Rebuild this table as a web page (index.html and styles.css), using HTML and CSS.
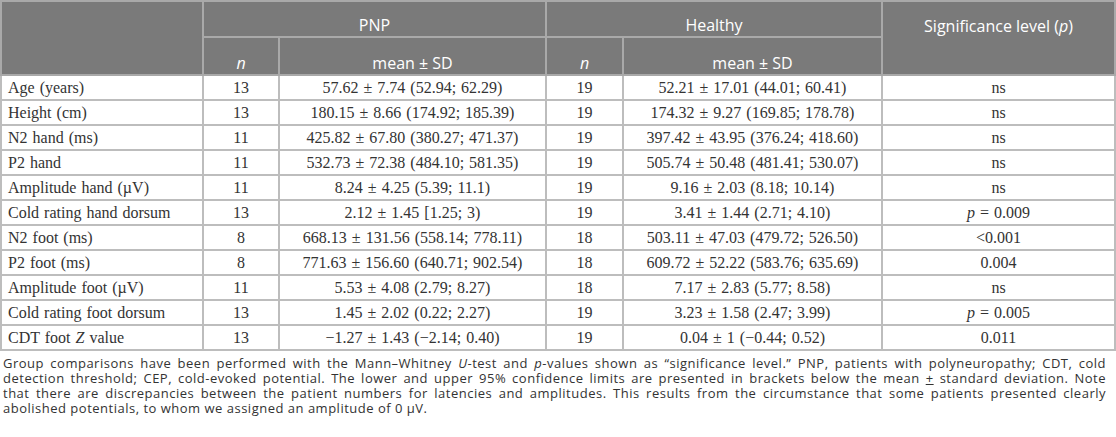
FILE: index.html
```html
<!DOCTYPE html>
<html lang="en">
<head>
    <meta charset="UTF-8">
    <title>CEP results</title>
    <link rel="stylesheet" href="styles.css">
</head>
<body>
    <table class="data-table">
        <colgroup>
            <col class="c-label">
            <col class="c-n">
            <col class="c-mean">
            <col class="c-n2">
            <col class="c-mean2">
            <col class="c-sig">
        </colgroup>
        <thead>
            <tr class="head-top">
                <th rowspan="2"></th>
                <th colspan="2">PNP</th>
                <th colspan="2">Healthy</th>
                <th rowspan="2" class="sig-head">Significance level (<i>p</i>)</th>
            </tr>
            <tr class="head-sub">
                <th><i>n</i></th>
                <th>mean ± SD</th>
                <th><i>n</i></th>
                <th>mean ± SD</th>
            </tr>
        </thead>
        <tbody>
            <tr><td>Age (years)</td><td>13</td><td>57.62 ± 7.74 (52.94; 62.29)</td><td>19</td><td>52.21 ± 17.01 (44.01; 60.41)</td><td>ns</td></tr>
            <tr><td>Height (cm)</td><td>13</td><td>180.15 ± 8.66 (174.92; 185.39)</td><td>19</td><td>174.32 ± 9.27 (169.85; 178.78)</td><td>ns</td></tr>
            <tr><td>N2 hand (ms)</td><td>11</td><td>425.82 ± 67.80 (380.27; 471.37)</td><td>19</td><td>397.42 ± 43.95 (376.24; 418.60)</td><td>ns</td></tr>
            <tr><td>P2 hand</td><td>11</td><td>532.73 ± 72.38 (484.10; 581.35)</td><td>19</td><td>505.74 ± 50.48 (481.41; 530.07)</td><td>ns</td></tr>
            <tr><td>Amplitude hand (µV)</td><td>11</td><td>8.24 ± 4.25 (5.39; 11.1)</td><td>19</td><td>9.16 ± 2.03 (8.18; 10.14)</td><td>ns</td></tr>
            <tr><td>Cold rating hand dorsum</td><td>13</td><td>2.12 ± 1.45 [1.25; 3)</td><td>19</td><td>3.41 ± 1.44 (2.71; 4.10)</td><td><i>p</i> = 0.009</td></tr>
            <tr><td>N2 foot (ms)</td><td>8</td><td>668.13 ± 131.56 (558.14; 778.11)</td><td>18</td><td>503.11 ± 47.03 (479.72; 526.50)</td><td>&lt;0.001</td></tr>
            <tr><td>P2 foot (ms)</td><td>8</td><td>771.63 ± 156.60 (640.71; 902.54)</td><td>18</td><td>609.72 ± 52.22 (583.76; 635.69)</td><td>0.004</td></tr>
            <tr><td>Amplitude foot (µV)</td><td>11</td><td>5.53 ± 4.08 (2.79; 8.27)</td><td>18</td><td>7.17 ± 2.83 (5.77; 8.58)</td><td>ns</td></tr>
            <tr><td>Cold rating foot dorsum</td><td>13</td><td>1.45 ± 2.02 (0.22; 2.27)</td><td>19</td><td>3.23 ± 1.58 (2.47; 3.99)</td><td><i>p</i> = 0.005</td></tr>
            <tr><td>CDT foot <i>Z</i> value</td><td>13</td><td>−1.27 ± 1.43 (−2.14; 0.40)</td><td>19</td><td>0.04 ± 1 (−0.44; 0.52)</td><td>0.011</td></tr>
        </tbody>
    </table>

    <p class="caption">
        <span class="cap-line">Group comparisons have been performed with the Mann–Whitney <i>U</i>-test and <i>p</i>-values shown as “significance level.” PNP, patients with polyneuropathy; CDT, cold</span>
        <span class="cap-line">detection threshold; CEP, cold-evoked potential. The lower and upper 95% confidence limits are presented in brackets below the mean <u>+</u> standard deviation. Note</span>
        <span class="cap-line">that there are discrepancies between the patient numbers for latencies and amplitudes. This results from the circumstance that some patients presented clearly</span>
        <span class="cap-end">abolished potentials, to whom we assigned an amplitude of 0 µV.</span>
    </p>
</body>
</html>
```

FILE: styles.css
```css
body {
    margin: 0;
    background-color: #ffffff;
    color: #333333;
}
.data-table {
    width: 1116px;
    table-layout: fixed;
    border-collapse: collapse;
    border: 2px solid #bdbdbd;
    font-family: "Liberation Serif", "Times New Roman", serif;
    font-size: 16px;
    word-spacing: 1px;
}
.c-label { width: 202px; }
.c-n { width: 76px; }
.c-mean { width: 267px; }
.c-n2 { width: 77px; }
.c-mean2 { width: 259px; }
.c-sig { width: 233px; }
.data-table th {
    background-color: #7a7a7a;
    color: #ffffff;
    font-family: "Open Sans", "Liberation Sans", sans-serif;
    font-size: 16px;
    font-weight: 400;
    word-spacing: 0;
    border: 2px solid #a9a9a9;
    vertical-align: bottom;
    padding: 0 6px 0 6px;
}
.head-top th {
    height: 34px;
}
.head-sub th {
    height: 36px;
}
.data-table th.sig-head {
    vertical-align: top;
    padding-top: 13px;
}
.data-table td {
    border: 2px solid #bdbdbd;
    height: 23px;
    padding: 0 6px;
    text-align: center;
    white-space: nowrap;
}
.data-table td:first-child {
    text-align: left;
}
.caption {
    margin: 5px 10px 0 3px;
    font-family: "Open Sans", "Liberation Sans", sans-serif;
    font-size: 13px;
    letter-spacing: 0.5px;
    line-height: 15px;
    color: #333333;
}
.cap-line {
    display: block;
    text-align: justify;
    text-align-last: justify;
    white-space: nowrap;
}
.cap-end {
    display: block;
}
```
